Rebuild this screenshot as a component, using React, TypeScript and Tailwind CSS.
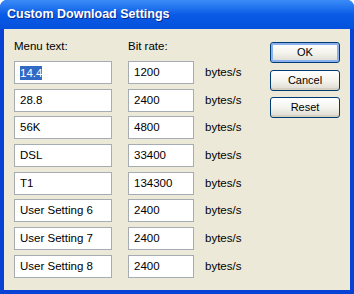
import React from 'react';

const rows = [
  { label: '14.4', rate: '1200', selected: true },
  { label: '28.8', rate: '2400' },
  { label: '56K', rate: '4800' },
  { label: 'DSL', rate: '33400' },
  { label: 'T1', rate: '134300' },
  { label: 'User Setting 6', rate: '2400' },
  { label: 'User Setting 7', rate: '2400' },
  { label: 'User Setting 8', rate: '2400' },
];

const XpButton = ({ children, focused }: { children: React.ReactNode; focused?: boolean }) => (
  <button
    className={
      'h-[21px] w-[70px] rounded-[3px] border border-[#003c74] bg-gradient-to-b from-white via-[#f5f4ee] to-[#dcdad0] text-[11px] text-black ' +
      (focused ? 'shadow-[inset_0_0_0_2px_#8bb0f0]' : 'shadow-[inset_0_-2px_0_#d6d0c0]')
    }
  >
    {children}
  </button>
);

export default function App() {
  return (
    <div
      className="flex h-[294px] w-[354px] flex-col overflow-hidden rounded-t-[7px] bg-[#0842d4]"
      style={{ fontFamily: '"Liberation Sans", Arial, sans-serif' }}
    >
      <div className="flex h-[29px] shrink-0 items-center bg-gradient-to-b from-[#3b8cf7] via-[#0a5be6] to-[#0550dc] pl-[7px]">
        <span className="text-[12.5px] font-bold text-white [text-shadow:1px_1px_0_#0a2a8a]">
          Custom Download Settings
        </span>
      </div>
      <div className="mx-[4px] mb-[4px] flex flex-1 items-start bg-[#ece9d8] pl-[10px] pr-[10px] pt-[11px]">
        <div className="grid grid-cols-[98px_66px_auto] content-start gap-x-[16px] text-[11.5px] text-black">
          <div className="h-[13px] leading-[13px]">Menu text:</div>
          <div className="h-[13px] leading-[13px]">Bit rate:</div>
          <div />
          <div className="col-span-3 mt-[8px] flex flex-col gap-[4.7px]">
            {rows.map((r) => (
              <div key={r.label} className="flex items-center">
                <div className="flex h-[23px] w-[98px] items-center border border-[#a5acb2] bg-white pl-[5px]">
                  {r.selected ? (
                    <span className="bg-[#316ac5] leading-[14px] text-white">{r.label}</span>
                  ) : (
                    <span>{r.label}</span>
                  )}
                </div>
                <div className="ml-[16px] flex h-[23px] w-[66px] items-center border border-[#a5acb2] bg-white pl-[5px]">
                  {r.rate}
                </div>
                <span className="ml-[11px]">bytes/s</span>
              </div>
            ))}
          </div>
        </div>
        <div className="ml-auto flex flex-col gap-[6.5px] pt-[2px]">
          <XpButton focused>OK</XpButton>
          <XpButton>Cancel</XpButton>
          <XpButton>Reset</XpButton>
        </div>
      </div>
    </div>
  );
}
